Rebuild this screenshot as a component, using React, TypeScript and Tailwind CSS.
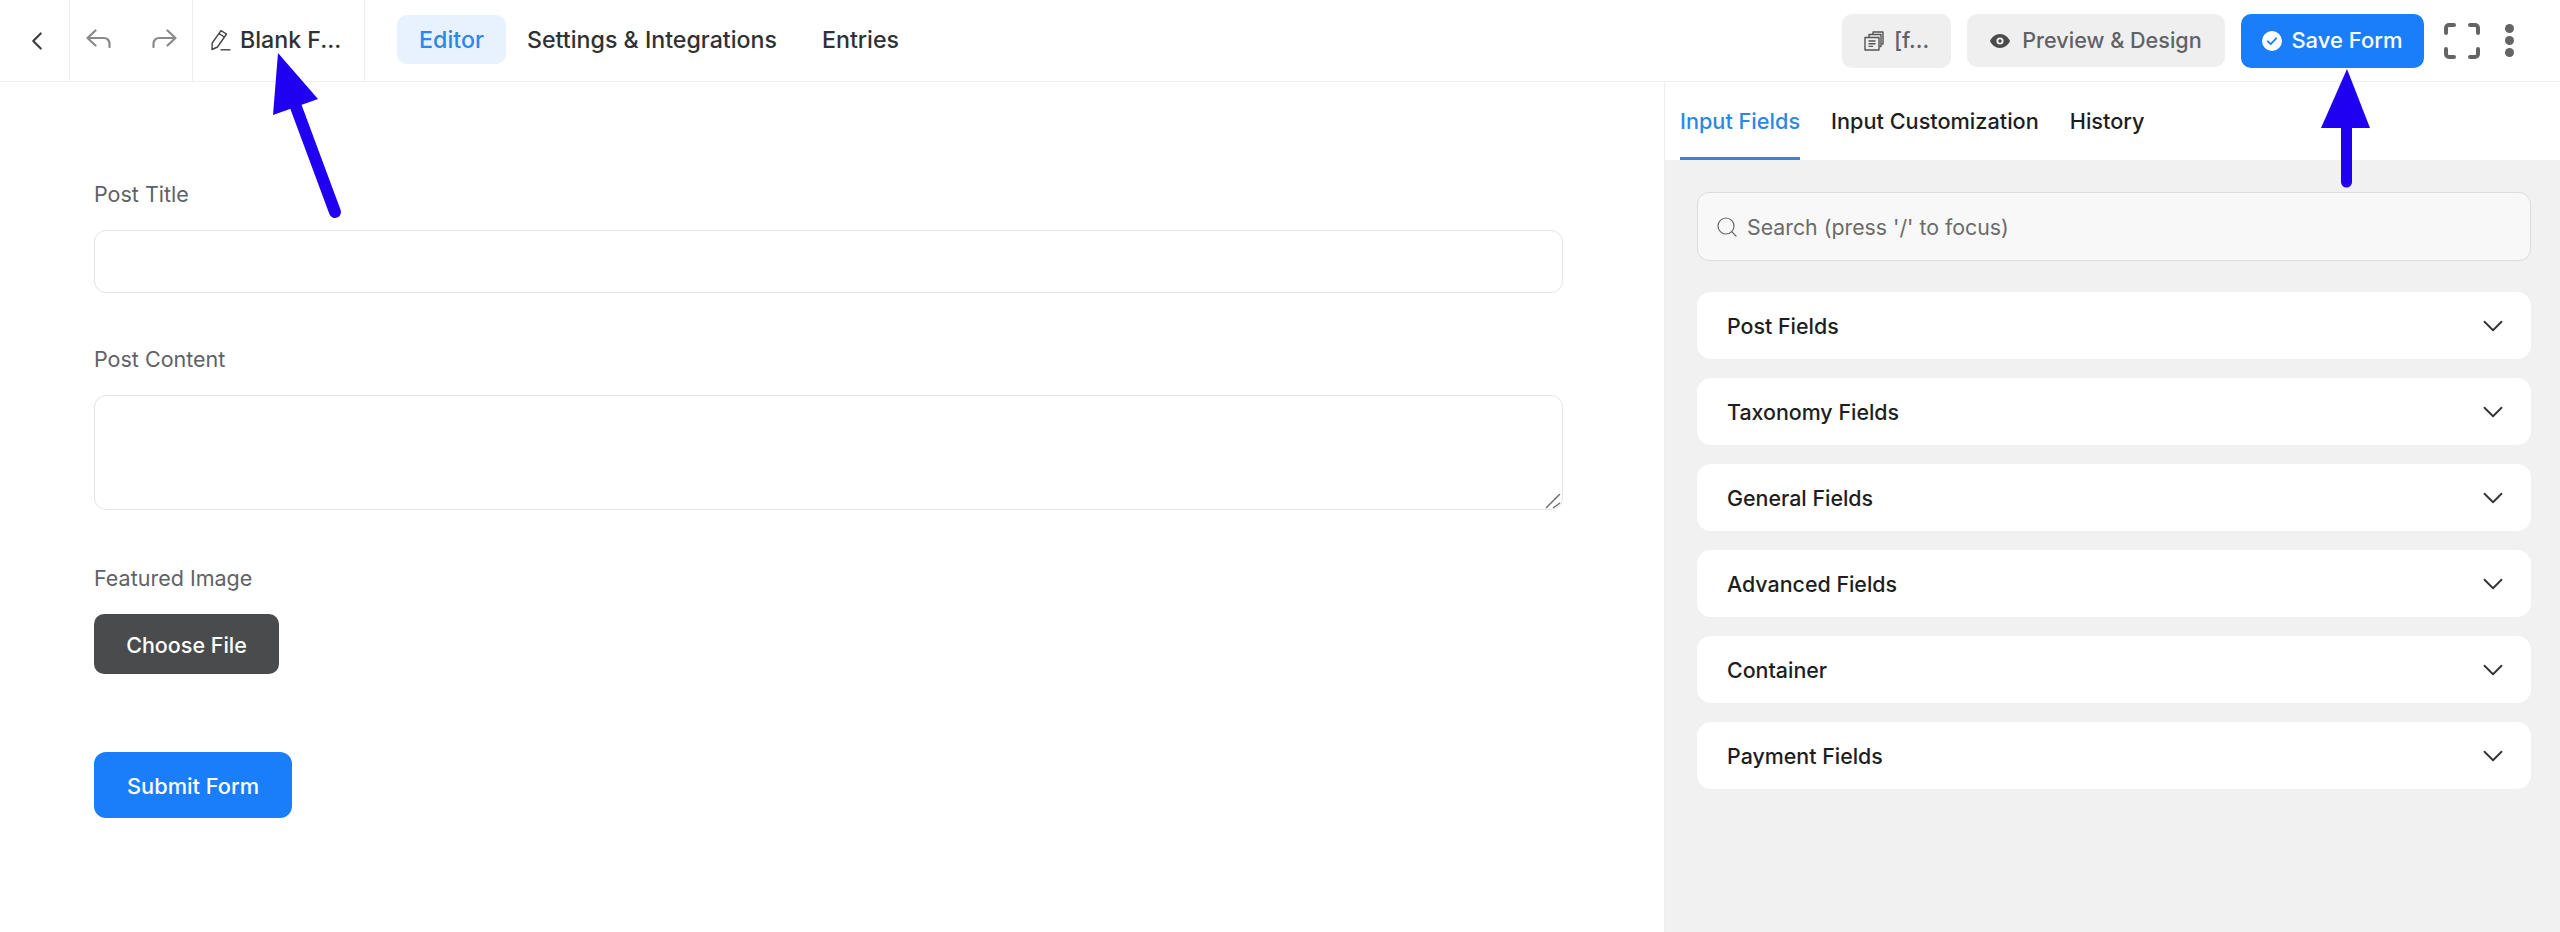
import { ChevronDown, ChevronLeft, Search } from "lucide-react";

const sections = ["Post Fields", "Taxonomy Fields", "General Fields", "Advanced Fields", "Container", "Payment Fields"];

function UndoIcon({ flip }: { flip?: boolean }) {
  return (
    <svg width="25" height="19" viewBox="0 0 25 19" fill="none" stroke="#8a8a8a" strokeWidth="2.2" strokeLinecap="round" strokeLinejoin="round" className={flip ? "-scale-x-100" : ""}>
      <path d="M9.500 1.500 1.500 9l8 7.500" />
      <path d="M2 9H18a5.500 5.500 0 0 1 5.500 5.500V18" />
    </svg>
  );
}

function PencilIcon() {
  return (
    <svg width="20" height="21" viewBox="0 0 20 21" fill="none" stroke="#444" strokeWidth="1.4" strokeLinejoin="round">
      <path d="M10 .7 15.500 4 6.500 17 1 19.500 1.200 13Z" />
      <path d="M8 3.700 13.400 7" />
      <path d="M9.500 19.800H19.500" />
    </svg>
  );
}

function CopyIcon() {
  return (
    <svg width="20" height="20" viewBox="0 0 20 20" fill="none" stroke="#555" strokeWidth="1.4" strokeLinejoin="round">
      <path d="M1 6.500H15V19H1Z" />
      <path d="M5 6V3.500H17V15.500H15.500" />
      <path d="M9 3V1H19V13H17.500" />
      <path d="M4.500 10H11.500M4.500 12.700H11.500M4.500 15.400H9" />
    </svg>
  );
}

function EyeIcon() {
  return (
    <svg width="20" height="14" viewBox="0 0 20 14">
      <path fillRule="evenodd" fill="#4a4a4a" d="M10 0C5.400 0 1.900 3 0 7c1.900 4 5.400 7 10 7s8.100-3 10-7c-1.900-4-5.400-7-10-7Zm0 3.400a3.600 3.600 0 1 1 0 7.200 3.600 3.600 0 0 1 0-7.200Z" />
      <circle cx="10" cy="7" r="1.700" fill="#4a4a4a" />
    </svg>
  );
}

function CheckBadge() {
  return (
    <svg width="20" height="20" viewBox="0 0 20 20">
      <circle cx="10" cy="10" r="10" fill="#fff" />
      <path d="M5.800 10.300 8.700 13.100 14.200 7.300" fill="none" stroke="#1a7efb" strokeWidth="1.800" strokeLinecap="round" strokeLinejoin="round" />
    </svg>
  );
}

function FullscreenIcon() {
  return (
    <svg width="36" height="36" viewBox="0 0 36 36" fill="none" stroke="#636466" strokeWidth="4" strokeLinecap="round">
      <path d="M2 10V5a3 3 0 0 1 3-3h5" />
      <path d="M26 2h5a3 3 0 0 1 3 3v5" />
      <path d="M2 26v5a3 3 0 0 0 3 3h5" />
      <path d="M34 26v5a3 3 0 0 1-3 3h-5" />
    </svg>
  );
}

function Field({ label, children }: { label: string; children: React.ReactNode }) {
  return (
    <div className="flex flex-col gap-[22px]">
      <label className="h-[30px] pt-[1px] text-[21.5px] leading-[30px] text-[#606266]">{label}</label>
      {children}
    </div>
  );
}

export default function App() {
  return (
    <div className="relative flex h-[932px] w-[2560px] flex-col overflow-hidden bg-white font-['Inter',sans-serif]">
      {/* top bar */}
      <header className="flex h-[82px] items-center border-b border-[#eeeeee]">
        <div className="flex h-full w-[70px] items-center border-r border-[#eeeeee] pl-[22px]">
          <ChevronLeft size={30} strokeWidth={1.7} color="#3c3c3c" />
        </div>
        <div className="flex h-full w-[123px] items-center gap-[41px] border-r border-[#eeeeee] pb-[4px] pl-[16px]">
          <UndoIcon />
          <UndoIcon flip />
        </div>
        <div className="flex h-full w-[172px] items-center gap-[9px] border-r border-[#eeeeee] pl-[18px] text-[23.2px] font-medium text-[#303133]">
          <PencilIcon />
          <span>Blank F...</span>
        </div>
        <nav className="mb-[3px] ml-[32px] flex items-center gap-[21px] text-[23.2px] font-medium text-[#303133]">
          <a className="flex h-[49px] w-[109px] items-center justify-center rounded-[10px] bg-[#e8f2ff] pt-[3px] text-[#2e86e6]">Editor</a>
          <a className="w-[250px] pt-[3px] whitespace-nowrap">Settings &amp; Integrations</a>
          <a className="ml-[24px] pt-[3px]">Entries</a>
        </nav>
        <div className="ml-auto flex items-center">
          <button className="flex h-[54px] w-[109px] items-center justify-center gap-[10px] rounded-[10px] bg-[#efefef] text-[22px] font-medium text-[#606266]">
            <CopyIcon />
            <span>[f...</span>
          </button>
          <button className="ml-[16px] flex h-[53px] w-[258px] items-center justify-center gap-[12px] rounded-[10px] bg-[#efefef] text-[21.6px] font-medium text-[#606266]">
            <EyeIcon />
            <span>Preview &amp; Design</span>
          </button>
          <button className="ml-[16px] flex h-[54px] w-[183px] items-center justify-center gap-[9px] rounded-[10px] bg-[#1a7efb] text-[22px] font-medium text-white">
            <CheckBadge />
            <span>Save Form</span>
          </button>
          <div className="ml-[20px]">
            <FullscreenIcon />
          </div>
          <div className="ml-[25px] mr-[46px] flex flex-col items-center gap-[3px]">
            <span className="h-[9px] w-[9px] rounded-full bg-[#636466]" />
            <span className="h-[9px] w-[9px] rounded-full bg-[#636466]" />
            <span className="h-[9px] w-[9px] rounded-full bg-[#636466]" />
          </div>
        </div>
      </header>

      <div className="flex flex-1">
        {/* form preview */}
        <main className="flex-1 pl-[94px] pr-[101px] pt-[96px]">
          <Field label="Post Title">
            <input className="h-[63px] w-full rounded-[12px] border border-[#e2e4e8] bg-white" />
          </Field>
          <div className="mt-[50px]">
            <Field label="Post Content">
              <div className="relative">
                <textarea className="block h-[115px] w-full resize-none rounded-[12px] border border-[#e2e4e8] bg-white" />
                <svg className="absolute bottom-0 right-[2px]" width="16" height="16" viewBox="0 0 16 16" fill="none" stroke="#6f6f6f" strokeWidth="1.500">
                  <path d="M1 14 15 0" />
                  <path d="M8 14 15 9" />
                </svg>
              </div>
            </Field>
          </div>
          <div className="mt-[52px]">
            <Field label="Featured Image">
              <button className="h-[60px] w-[185px] rounded-[10px] bg-[#4a4b4d] pt-[2px] text-[21.5px] font-medium text-white">Choose File</button>
            </Field>
          </div>
          <button className="mt-[78px] block h-[66px] w-[198px] rounded-[12px] bg-[#1a7efb] pt-[2px] text-[21.8px] font-medium text-white">Submit Form</button>
        </main>

        {/* sidebar */}
        <aside className="flex w-[896px] flex-col border-l border-[#eeeeee] bg-[#f1f1f1]">
          <div className="flex h-[78px] items-start gap-[31px] bg-white pl-[15px] text-[21.7px] font-medium text-[#1e1e1e]">
            <a className="flex h-[78px] items-center border-b-[3px] border-[#2e86e6] pt-[4px] text-[#2e86e6]">Input Fields</a>
            <a className="flex h-[78px] items-center pt-[1px]">Input Customization</a>
            <a className="flex h-[78px] items-center pt-[1px]">History</a>
          </div>
          <div className="pl-[32px] pr-[29px] pt-[32px]">
            <div className="flex h-[69px] items-center gap-[8px] rounded-[12px] border border-[#dcdcdc] bg-[#f8f8f8] pl-[17px]">
              <Search size={24} strokeWidth={1.2} color="#666" />
              <span className="pt-[3px] text-[21.3px] text-[#6b6b6b]">Search (press '/' to focus)</span>
            </div>
            <div className="mt-[31px] flex flex-col gap-[19px]">
              {sections.map((name) => (
                <div key={name} className="flex h-[67px] items-center justify-between rounded-[14px] bg-white pl-[30px] pr-[21px]">
                  <span className="pt-[2px] text-[21.4px] font-medium text-[#1e1e1e]">{name}</span>
                  <ChevronDown size={34} strokeWidth={1.3} color="#333" />
                </div>
              ))}
            </div>
          </div>
        </aside>
      </div>

      {/* annotation arrows */}
      <svg className="absolute left-[260px] top-[45px]" width="90" height="185" viewBox="260 45 90 185">
        <path d="M278 53 318 99 273 115Z" fill="#1f00f0" />
        <path d="M296 107 335 212" stroke="#1f00f0" strokeWidth="12" strokeLinecap="round" />
      </svg>
      <svg className="absolute left-[2310px] top-[60px]" width="70" height="135" viewBox="2310 60 70 135">
        <path d="M2347 69 2370 128 2321 128Z" fill="#1f00f0" />
        <path d="M2346.500 125V182" stroke="#1f00f0" strokeWidth="11" strokeLinecap="round" />
      </svg>
    </div>
  );
}
